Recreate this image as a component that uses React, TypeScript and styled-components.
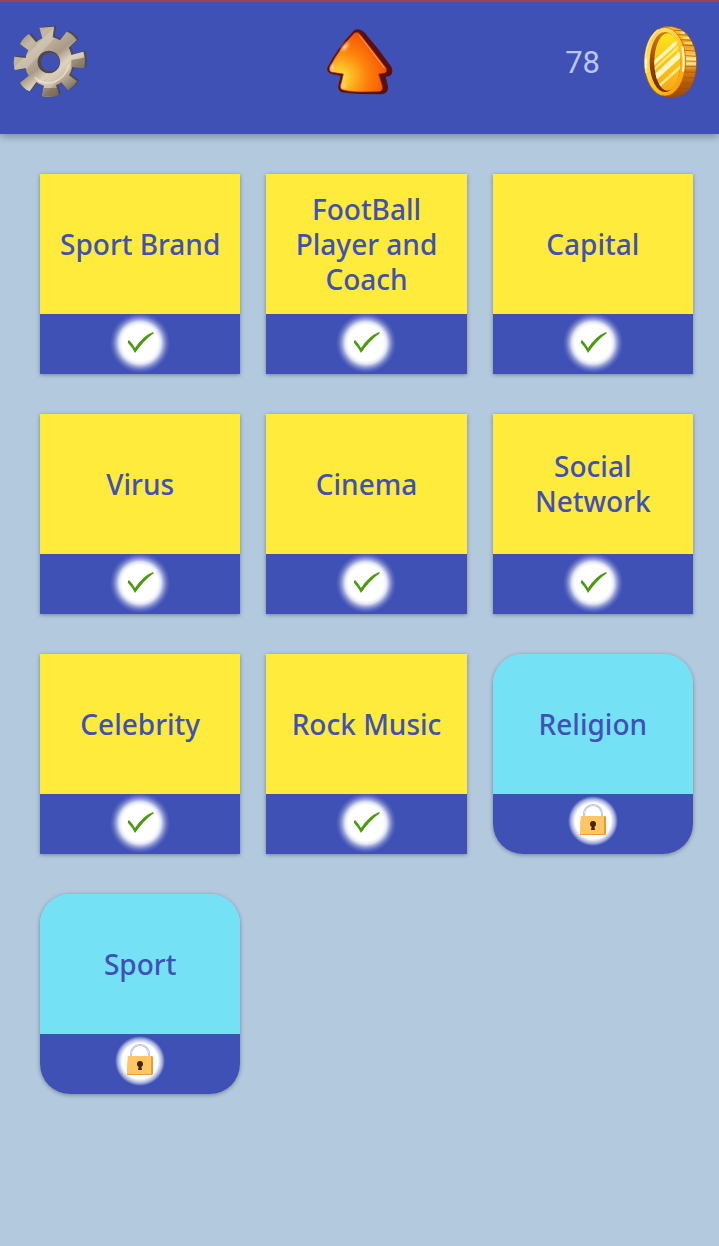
import React from "react";
import styled, { createGlobalStyle } from "styled-components";

const GlobalStyle = createGlobalStyle`
  * { box-sizing: border-box; }
  body {
    margin: 0;
    min-height: 100vh;
    background: #b3c9de;
    font-family: "Noto Sans", "Open Sans", sans-serif;
  }
`;

const Header = styled.header`
  display: grid;
  grid-template-columns: 1fr auto 1fr;
  align-items: center;
  padding: 22px 12px 34px;
  background: #3f51b5;
  border-top: 2px solid #9c4458;
  box-shadow: 0 2px 8px rgba(0, 0, 0, 0.35);
`;

const IconButton = styled.button`
  display: block;
  justify-self: start;
  padding: 0;
  border: 0;
  background: none;
  cursor: pointer;

  svg { display: block; }
`;

const Wallet = styled.div`
  display: flex;
  align-items: center;
  justify-content: flex-end;
  gap: 42px;
  padding-right: 8px;

  svg { display: block; }
`;

const Coins = styled.span`
  padding-top: 2px;
  font-family: Roboto, sans-serif;
  font-size: 31px;
  line-height: 36px;
  color: #bcc6f2;
`;

const Grid = styled.main`
  display: grid;
  grid-template-columns: repeat(3, 1fr);
  row-gap: 40px;
  padding: 40px 0 40px 40px;
`;

const Card = styled.button<{ $locked: boolean }>`
  display: flex;
  flex-direction: column;
  margin: 0 26px 0 0;
  padding: 0;
  border: 0;
  overflow: hidden;
  border-radius: ${(p) => (p.$locked ? "30px" : "0")};
  background: linear-gradient(${(p) => (p.$locked ? "#74e1f4" : "#ffeb3b")} 50%, #3f51b5 50%);
  box-shadow: 0 1px 4px rgba(0, 0, 0, 0.35);
  font-family: inherit;
  cursor: pointer;
`;

const CardTitle = styled.span<{ $locked: boolean }>`
  display: flex;
  align-items: center;
  justify-content: center;
  width: 100%;
  min-height: 140px;
  padding: 0 12px;
  background: ${(p) => (p.$locked ? "#74e1f4" : "#ffeb3b")};
  color: #3f51b5;
  font-size: 28px;
  font-weight: 500;
  line-height: 35px;
  text-align: center;
`;

const CardStatus = styled.span`
  display: flex;
  justify-content: center;
  width: 100%;
  height: 60px;

  svg { display: block; }
`;

const GEAR =
  "M118 83 L162 80 L158 112 Q170 115 180 121 L200 95 Q220 103 230 120 L206 143 Q212 153 214 165 L250 155 Q257 178 252 204 L216 201 Q214 214 207 226 L231 244 Q221 261 204 271 L184 247 Q176 253 168 255 L176 285 Q153 294 126 289 L132 257 Q119 254 109 246 L89 274 Q70 266 60 248 L86 227 Q78 216 77 204 L44 210 Q38 190 43 170 L77 174 Q79 160 85 151 L60 132 Q70 112 87 102 L108 127 Q117 119 127 115 Z";
const HOLE = "M146 152 a34 34 0 1 0 1 0 Z";

const GearIcon = () => (
  <svg width="76" height="76" viewBox="36 72 228 228" aria-hidden="true">
    <defs>
      <linearGradient id="gear-metal" gradientUnits="userSpaceOnUse" x1="70" y1="90" x2="215" y2="275">
        <stop offset="0" stopColor="#978a78" />
        <stop offset=".18" stopColor="#c4b8a4" />
        <stop offset=".36" stopColor="#b9ab97" />
        <stop offset=".5" stopColor="#a89a86" />
        <stop offset=".64" stopColor="#dcd0bb" />
        <stop offset=".78" stopColor="#bfb09a" />
        <stop offset="1" stopColor="#75675a" />
      </linearGradient>
      <clipPath id="gear-clip">
        <path d={GEAR + HOLE} clipRule="evenodd" />
      </clipPath>
    </defs>
    <path d={GEAR} fill="#4b4645" transform="translate(6 -3)" />
    <path d={GEAR} fill="#5a5350" transform="translate(3 -1)" />
    <path d={GEAR} fill="#4f4845" />
    <path d={GEAR + HOLE} fillRule="evenodd" fill="url(#gear-metal)" />
    <g clipPath="url(#gear-clip)">
      <path d="M40 205 L170 75 L186 90 L58 230 Z" fill="#f3ead8" opacity=".3" />
      <path d="M90 290 L250 132 L262 158 L120 295 Z" fill="#f6eedb" opacity=".22" />
      <path d="M126 289 L132 264 L172 264 L178 290 Z M214 180 L256 172 L254 204 L214 202 Z" fill="#5d4f3e" opacity=".5" />
      <path d="M104 232 Q130 256 162 246 Q198 232 207 194" fill="none" stroke="#fff7e3" strokeWidth="5" opacity=".5" />
    </g>
    <circle cx="151" cy="186" r="28" fill="#3f51b5" />
  </svg>
);

const ArrowIcon = () => (
  <svg width="68" height="68" viewBox="50 38 204 204" aria-hidden="true">
    <defs>
      <radialGradient id="arrow-fire" gradientUnits="userSpaceOnUse" cx="92" cy="185" r="145">
        <stop offset="0" stopColor="#ffe447" />
        <stop offset=".25" stopColor="#ffb824" />
        <stop offset=".55" stopColor="#ff820c" />
        <stop offset="1" stopColor="#f25205" />
      </radialGradient>
      <radialGradient id="arrow-shine">
        <stop offset="0" stopColor="#ffe0b0" stopOpacity=".9" />
        <stop offset="1" stopColor="#ffb060" stopOpacity="0" />
      </radialGradient>
    </defs>
    <path
      d="M133 46 Q148 36 165 51 Q206 98 246 154 Q254 172 242 181 Q235 185 229 184 L236 213 Q238 235 218 237 L157 236 Q120 235 98 231 Q85 226 87 211 L94 181 L68 176 Q51 172 54 157 Q84 98 133 46 Z"
      fill="#591012"
    />
    <path
      d="M134 54 Q143 48 150 54 Q190 105 230 157 Q236 169 226 173 L208 176 L219 212 Q222 227 209 229 L158 230 Q121 230 98 223 Q91 219 94 210 L102 176 L68 171 Q57 168 61 156 Q90 99 134 54 Z"
      fill="url(#arrow-fire)"
      stroke="#a52a08"
      strokeWidth="2"
    />
    <path d="M150 60 Q188 108 226 159" fill="none" stroke="#ffac64" strokeWidth="3" opacity=".85" />
    <ellipse cx="107" cy="95" rx="13" ry="23" transform="rotate(40 107 95)" fill="url(#arrow-shine)" />
    <ellipse cx="70" cy="157" rx="11" ry="16" fill="url(#arrow-shine)" />
    <ellipse cx="104" cy="211" rx="13" ry="14" fill="url(#arrow-shine)" />
  </svg>
);

const CoinIcon = () => (
  <svg width="57" height="74" viewBox="276 46 171 222" role="img" aria-label="Coins">
    <defs>
      <linearGradient id="coin-edge" x1="0" y1="0" x2="0" y2="1">
        <stop offset="0" stopColor="#ffc62e" />
        <stop offset=".28" stopColor="#f0a01c" />
        <stop offset=".48" stopColor="#ffe372" />
        <stop offset=".62" stopColor="#d67d10" />
        <stop offset=".8" stopColor="#b55a0a" />
        <stop offset="1" stopColor="#a04a08" />
      </linearGradient>
      <linearGradient id="coin-rim" x1="0" y1="0" x2="1" y2="1">
        <stop offset="0" stopColor="#f7a818" />
        <stop offset=".25" stopColor="#ffdf68" />
        <stop offset=".55" stopColor="#ffc91d" />
        <stop offset="1" stopColor="#f58c0a" />
      </linearGradient>
      <linearGradient id="coin-face" x1="0" y1="0" x2="0" y2="1">
        <stop offset="0" stopColor="#ffe51c" />
        <stop offset="1" stopColor="#f8a516" />
      </linearGradient>
      <linearGradient id="coin-wall" x1="0" y1="0" x2="0" y2="1">
        <stop offset="0" stopColor="#d27a0c" />
        <stop offset=".6" stopColor="#8f3d08" />
        <stop offset="1" stopColor="#6f2a06" />
      </linearGradient>
      <clipPath id="coin-clip">
        <ellipse cx="352" cy="157" rx="39" ry="86" />
      </clipPath>
    </defs>
    <path
      d="M338 52 Q365 46 391 58 C424 77 440 115 440 160 C440 207 422 246 395 257 Q370 267 342 261 Z"
      fill="url(#coin-edge)"
      stroke="#99450b"
      strokeWidth="2"
    />
    <path
      d="M372 62 L396 63 M384 75 L413 76 M392 90 L424 92 M399 106 L431 108 M404 122 L436 124 M406 138 L439 140 M407 154 L440 155 M407 170 L440 171 M405 187 L437 188 M401 204 L432 205 M394 220 L425 221 M385 236 L414 237 M372 249 L400 250"
      fill="none"
      stroke="#a04c0c"
      strokeWidth="2"
    />
    <path
      d="M392 69 L404 70 M398 84 L417 85 M404 100 L426 101 M408 147 L437 148 M408 162 L437 163"
      fill="none"
      stroke="#fff1a6"
      strokeWidth="6"
      opacity=".7"
    />
    <ellipse cx="345" cy="156" rx="62" ry="103" fill="url(#coin-rim)" stroke="#b65c08" strokeWidth="2" />
    <path d="M288 190 C280 137 292 84 325 60" fill="none" stroke="#ffeda0" strokeWidth="5" opacity=".8" />
    <path d="M288 146 L288 176 M397 110 Q404 150 399 186" fill="none" stroke="#fff8d5" strokeWidth="6" />
    <ellipse cx="345" cy="157" rx="46" ry="90" fill="url(#coin-wall)" />
    <g clipPath="url(#coin-clip)">
      <rect x="304" y="64" width="92" height="190" fill="url(#coin-face)" />
      <path d="M300 164 L396 76 L396 90 L300 178 Z M300 206 L396 118 L396 140 L300 228 Z" fill="#fff6c5" />
      <path d="M300 186 L396 98 L396 106 L300 194 Z M310 240 L396 162 L396 172 L316 244 Z" fill="#ffe98b" />
    </g>
  </svg>
);

const CheckBadge = () => (
  <svg width="60" height="60" viewBox="0 0 60 60" role="img" aria-label="Completed">
    <defs>
      <radialGradient id="check-glow">
        <stop offset="0" stopColor="#fff" />
        <stop offset=".6" stopColor="#fff" />
        <stop offset=".7" stopColor="#fff" stopOpacity=".85" />
        <stop offset=".8" stopColor="#fff" stopOpacity=".45" />
        <stop offset=".9" stopColor="#fff" stopOpacity=".15" />
        <stop offset="1" stopColor="#fff" stopOpacity="0" />
      </radialGradient>
    </defs>
    <circle cx="30" cy="29" r="30" fill="url(#check-glow)" />
    <path
      d="M18 27 L19 26 Q22 29 25 34 Q33 22 43 18 L44 19 Q34 26 25 39 Q22 33 18 29 Z"
      fill="#4c9a10"
    />
  </svg>
);

const LockBadge = () => (
  <svg width="60" height="60" viewBox="0 0 60 60" role="img" aria-label="Locked">
    <defs>
      <radialGradient id="lock-glow">
        <stop offset="0" stopColor="#fff" />
        <stop offset=".72" stopColor="#fff" />
        <stop offset=".88" stopColor="#fff" stopOpacity=".55" />
        <stop offset="1" stopColor="#fff" stopOpacity="0" />
      </radialGradient>
    </defs>
    <circle cx="30" cy="27" r="25" fill="url(#lock-glow)" />
    <path d="M21 23 V20 A9 9 0 0 1 39 20 V23" fill="none" stroke="#a3aecb" strokeWidth="2" />
    <path d="M21 22 V20 A9 9 0 0 1 39 20 V22" fill="none" stroke="#e4e9f5" strokeWidth="1" />
    <path d="M18 22 H42 L43 23 V40 L42 41 H17 Z" fill="#e89b38" />
    <path d="M18 22 H41 V40 H17 Z" fill="#ffc663" />
    <circle cx="30" cy="30" r="3" fill="#43250d" />
    <path d="M29 31 H31 L32 36 H28 Z" fill="#43250d" />
  </svg>
);

interface Category {
  title: string;
  locked?: boolean;
}

const categories: Category[] = [
  { title: "Sport Brand" },
  { title: "FootBall Player and Coach" },
  { title: "Capital" },
  { title: "Virus" },
  { title: "Cinema" },
  { title: "Social Network" },
  { title: "Celebrity" },
  { title: "Rock Music" },
  { title: "Religion", locked: true },
  { title: "Sport", locked: true },
];

const CategoryCard = ({ title, locked = false }: Category) => (
  <Card type="button" $locked={locked}>
    <CardTitle $locked={locked}>{title}</CardTitle>
    <CardStatus>{locked ? <LockBadge /> : <CheckBadge />}</CardStatus>
  </Card>
);

export default function App() {
  return (
    <>
      <GlobalStyle />
      <Header>
        <IconButton type="button" aria-label="Settings">
          <GearIcon />
        </IconButton>
        <IconButton type="button" aria-label="Up">
          <ArrowIcon />
        </IconButton>
        <Wallet>
          <Coins>78</Coins>
          <CoinIcon />
        </Wallet>
      </Header>
      <Grid>
        {categories.map((c) => (
          <CategoryCard key={c.title} {...c} />
        ))}
      </Grid>
    </>
  );
}
